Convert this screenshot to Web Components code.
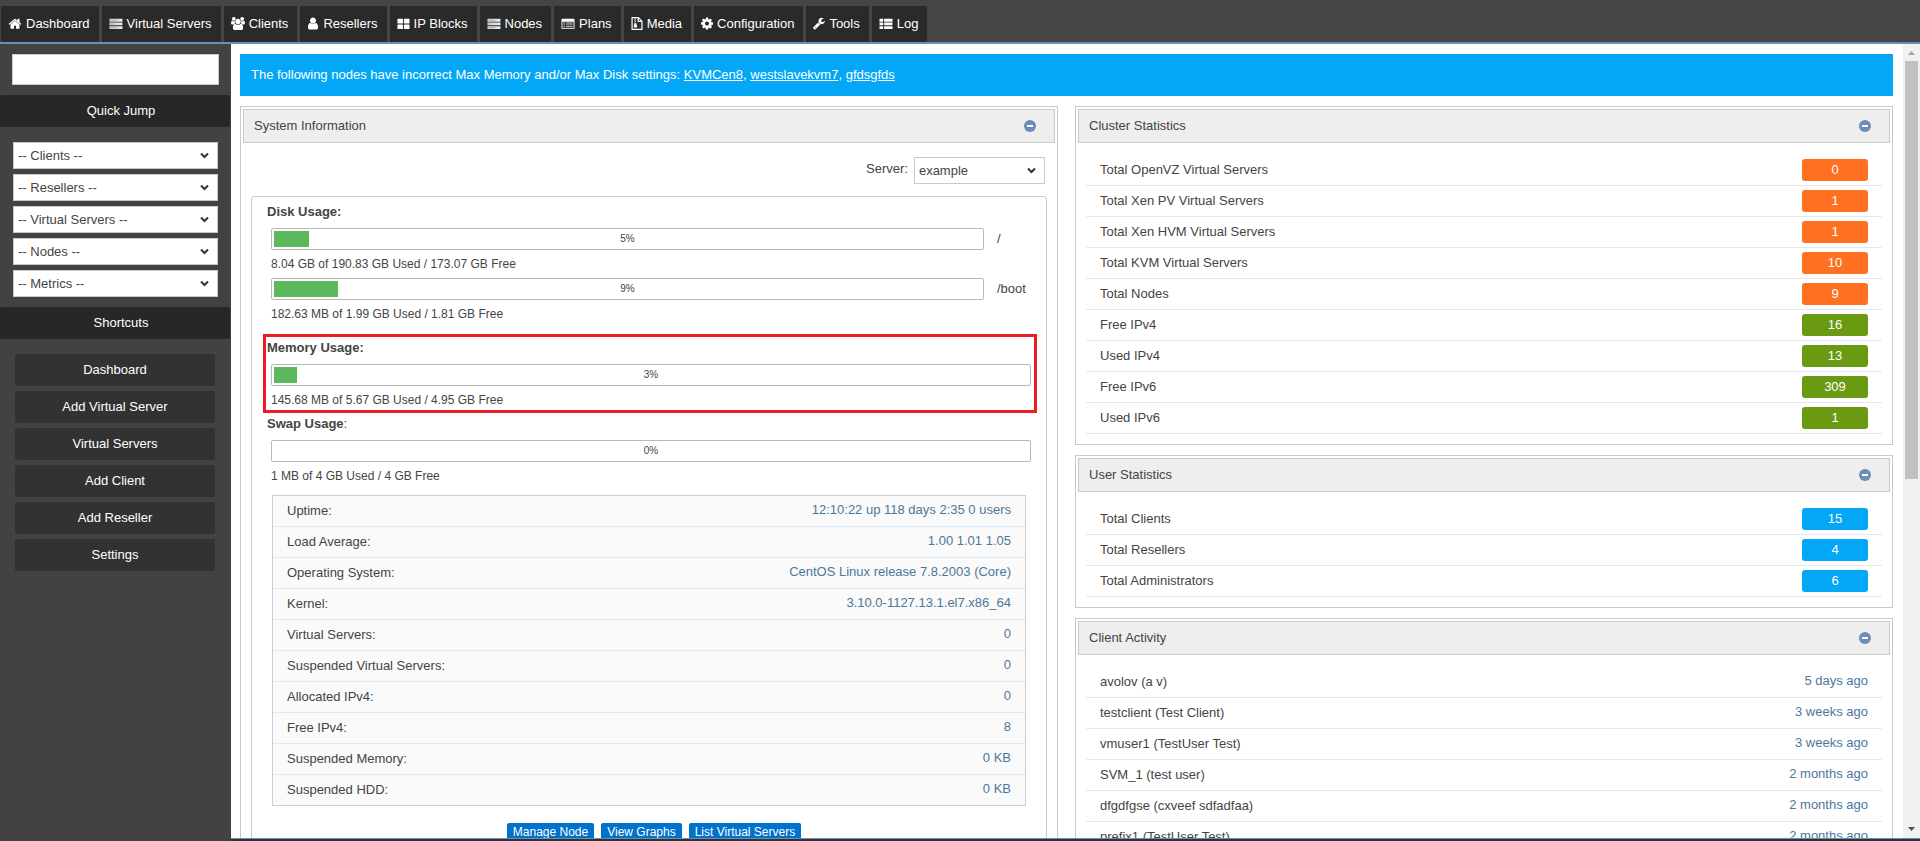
<!DOCTYPE html>
<html lang="en">
<head>
<meta charset="utf-8">
<title>Dashboard</title>
<style>
html, body { height: 100%; }
body {
  margin: 0;
  font-family: "Liberation Sans", Arial, sans-serif;
  font-size: 13px;
  line-height: 16px;
  color: #444;
  --rule: #dfe9f1;
  --edge: #c8caca;
  --steel: #6b8db8;
  --sky: #03a7f6;
  --value: #4d7799;
}
</style>
</head>
<body>
<admin-app></admin-app>
<script>
const ICONS = {
  home: ['0 100 1792 1500', '<path d="M1472 992v480q0 26-19 45t-45 19h-384v-384h-256v384h-384q-26 0-45-19t-19-45v-480q0-1 .5-3t.5-3l575-474 575 474q1 2 1 6zm223-69l-62 74q-8 9-21 11h-3q-13 0-21-7l-692-577-692 577q-12 8-24 7-13-2-21-11l-62-74q-8-10-7-23.5t11-21.5l719-599q32-26 76-26t76 26l244 204v-195q0-14 9-23t23-9h192q14 0 23 9t9 23v408l219 182q10 8 11 21.5t-7 23.5z"/>', 14],
  server: ['0 0 14 14', '<path opacity=".85" d="M0 2h14v3H0zM0 6h14v3H0zM0 10h14v3H0z"/><path fill="#2a2a2a" opacity=".3" d="M1 3h7v1H1zM1 7h4v1H1zM1 11h7v1H1z"/><path d="M11 3h2v1h-2zM11 7h2v1h-2zM11 11h2v1h-2z"/>', 14],
  users: ['-64 0 1920 1792', '<path d="M529 896q-162 5-265 128h-134q-82 0-138-40.5t-56-118.500q0-353 124-353 6 0 43.500 21t97.500 42.500 119 21.500q67 0 133-23-5 37-5 66 0 139 81 256zm1071 637q0 120-73 189.500t-194 69.500h-874q-121 0-194-69.500t-73-189.500q0-53 3.500-103.500t14-109 26.500-108.500 43-97.500 62-81 85.500-53.500 111.500-20q10 0 43 21.500t73 48 107 48 135 21.500 135-21.500 107-48 73-48 43-21.500q61 0 111.500 20t85.500 53.500 62 81 43 97.500 26.500 108.500 14 109 3.500 103.500zm-1024-1277q0 106-75 181t-181 75-181-75-75-181 75-181 181-75 181 75 75 181zm704 384q0 159-112.500 271.500t-271.500 112.500-271.500-112.500-112.500-271.500 112.500-271.500 271.500-112.500 271.500 112.500 112.500 271.500zm576 225q0 78-56 118.500t-138 40.500h-134q-103-123-265-128 81-117 81-256 0-29-5-66 66 23 133 23 59 0 119-21.500t97.500-42.500 43.500-21q124 0 124 353zm-128-609q0 106-75 181t-181 75-181-75-75-181 75-181 181-75 181 75 75 181z"/>', 14],
  user: ['196 64 1400 1660', '<path d="M1536 1399q0 109-62.500 187t-150.500 78h-854q-88 0-150.500-78t-62.500-187q0-85 8.500-160.500t31.500-152 58.500-131 94-89 134.500-34.500q131 128 313 128t313-128q76 0 134.500 34.500t94 89 58.500 131 31.500 152 8.500 160.500zm-256-887q0 159-112.500 271.500t-271.500 112.500-271.500-112.500-112.500-271.500 112.500-271.500 271.500-112.500 271.500 112.500 112.500 271.500z"/>', 12],
  blocks: ['0 0 13 14', '<rect x="0" y="2" width="6" height="5" rx=".6"/><rect x="7" y="2" width="6" height="5" rx=".6"/><rect x="0" y="8" width="6" height="5" rx=".6"/><rect x="7" y="8" width="6" height="5" rx=".6"/>', 13],
  plans: ['0 0 14 14', '<path fill-rule="evenodd" d="M1 2h12q1 0 1 1v9q0 1-1 1H1q-1 0-1-1V3q0-1 1-1zM1 5v7h12V5z"/><path opacity=".8" d="M2 6h2v1H2zM5 6h7v1H5zM2 8h2v1H2zM5 8h7v1H5zM2 10h2v1H2zM5 10h7v1H5z"/>', 14],
  media: ['0 0 12 14', '<path fill="none" stroke="currentColor" stroke-width="1.300" d="M.700.700h6.800l3.800 3.800v8.800H.700zM7.300.700v4h4"/><path d="M3 1h1v1H3zM4 2h1v1H4zM3 3h1v1H3zM4 4h1v1H4zM3 5h1v1H3zM3.500 6.500h1.500l1.200 3.200q.3 1.800-1.900 1.800t-1.900-1.800z"/>', 12],
  cog: ['128 128 1536 1536', '<path d="M1152 896q0-106-75-181t-181-75-181 75-75 181 75 181 181 75 181-75 75-181zm512-109v222q0 12-8 23t-20 13l-185 28q-19 54-39 91 35 50 107 138 10 12 10 25t-9 23q-27 37-99 108t-94 71q-12 0-26-9l-138-108q-44 23-91 38-16 136-29 186-7 28-36 28h-222q-14 0-24.500-8.500t-11.500-21.500l-28-184q-49-16-90-37l-141 107q-10 9-25 9-14 0-25-11-126-114-165-168-7-10-7-23 0-12 8-23 15-21 51-66.500t54-70.500q-27-50-41-99l-183-27q-13-2-21-12.500t-8-23.500v-222q0-12 8-23t19-13l186-28q14-46 39-92-40-57-107-138-10-12-10-24 0-10 9-23 26-36 98.500-107.500t94.500-71.500q13 0 26 10l138 107q44-23 91-38 16-136 29-186 7-28 36-28h222q14 0 24.500 8.500t11.500 21.500l28 184q49 16 90 37l142-107q9-9 24-9 13 0 25 10 129 119 165 170 7 8 7 22 0 12-8 23-15 21-51 66.500t-54 70.500q26 50 41 98l183 28q13 2 21 12.500t8 23.500z"/>', 12],
  wrench: ['64 64 1680 1720', '<path d="M448 1472q0-26-19-45t-45-19-45 19-19 45 19 45 45 19 45-19 19-45zm644-420l-682 682q-37 37-90 37-52 0-91-37l-106-108q-38-36-38-90 0-53 38-91l681-681q39 98 114.500 173.500t173.500 114.500zm634-435q0 39-23 106-47 134-164.500 217.500t-258.500 83.500q-185 0-316.500-131.500t-131.500-316.500 131.500-316.500 316.500-131.500q58 0 121.500 16.500t107.500 46.500q16 11 16 28t-16 28l-293 169v224l193 107q5-3 79-48.500t135.500-81 70.500-35.500q15 0 23.500 10t8.500 25z"/>', 12],
  list: ['0 0 14 14', '<path d="M0 2h4v3H0zM5 2h9v3H5zM0 6h4v3H0zM5 6h9v3H5zM0 10h4v3H0zM5 10h9v3H5z"/>', 14],
};

function define(name, html, setup) {
  const template = document.createElement('template');
  template.innerHTML = html;
  customElements.define(name, class extends HTMLElement {
    constructor() {
      super();
      this.attachShadow({ mode: 'open' }).append(template.content.cloneNode(true));
    }
    connectedCallback() { if (setup) setup(this, this.shadowRoot); }
  });
}

define('nav-tab', `
<style>
:host { display: block; }
a { display: flex; align-items: center; gap: 4px; height: 36px; padding: 0 9px 0 7px; box-sizing: border-box; background: #2a2a2a; color: #fff; text-decoration: none; white-space: nowrap; }
svg { height: 13px; fill: currentColor; flex: none; margin-bottom: 2px; }
</style>
<a href="#"><svg aria-hidden="true"></svg><slot></slot></a>`, (host, root) => {
  const [box, shape, width] = ICONS[host.getAttribute('icon')];
  const svg = root.querySelector('svg');
  svg.setAttribute('viewBox', box);
  svg.style.width = width + 'px';
  svg.innerHTML = shape;
});

define('top-nav', `
<style>
:host { display: block; background: #454545; border-bottom: 2px solid var(--steel); }
nav { display: flex; gap: 3px; padding: 6px 1px 0; }
</style>
<nav>
<nav-tab icon="home">Dashboard</nav-tab><nav-tab icon="server">Virtual Servers</nav-tab><nav-tab icon="users">Clients</nav-tab><nav-tab icon="user">Resellers</nav-tab><nav-tab icon="blocks">IP Blocks</nav-tab><nav-tab icon="server">Nodes</nav-tab><nav-tab icon="plans">Plans</nav-tab><nav-tab icon="media">Media</nav-tab><nav-tab icon="cog">Configuration</nav-tab><nav-tab icon="wrench">Tools</nav-tab><nav-tab icon="list">Log</nav-tab>
</nav>`);

define('drop-down', `
<style>
:host { display: block; }
label { display: flex; align-items: flex-start; gap: 6px; }
span { line-height: 24px; }
span:empty { display: none; }
.box { position: relative; flex: 1; display: block; }
select { display: block; appearance: none; width: 100%; height: 27px; margin: 0; padding: 0 22px 0 4px; border: 1px solid var(--edge); border-radius: 0; background: #fff; color: #444; font: inherit; }
svg { position: absolute; right: 9px; top: 10px; width: 9px; height: 7px; fill: none; stroke: #333; stroke-width: 2; pointer-events: none; }
</style>
<label><span></span><div class="box"><select><option></option></select><svg viewBox="0 0 9 7"><path d="M1 1.500l3.500 3.500 3.500-3.500"/></svg></div></label>`, (host, root) => {
  root.querySelector('span').textContent = host.getAttribute('label') || '';
  root.querySelector('option').textContent = host.getAttribute('value');
  root.querySelector('select').setAttribute('aria-label', host.getAttribute('label') || host.getAttribute('value'));
});

define('side-bar', `
<style>
:host { display: block; width: 231px; flex: none; box-sizing: border-box; background: #424242; }
.search { padding: 10px 12px; }
input { display: block; width: 100%; height: 31px; box-sizing: border-box; border: 1px solid #ccc; background: #fff; padding: 0 6px; font: inherit; }
h2 { margin: 0 1px 0 0; padding-left: 12px; height: 32px; line-height: 32px; background: #272727; color: #fff; font-size: 13px; font-weight: normal; text-align: center; border-radius: 2px; }
.jump { display: grid; gap: 5px; padding: 15px 13px 10px; }
.links { display: grid; gap: 5px; padding: 15px 16px 15px 15px; }
.links a { height: 32px; line-height: 32px; border-radius: 2px; background: #323232; color: #fff; text-align: center; text-decoration: none; }
</style>
<div class="search"><input type="text" aria-label="Search"></div>
<h2>Quick Jump</h2>
<div class="jump">
<drop-down value="-- Clients --"></drop-down><drop-down value="-- Resellers --"></drop-down><drop-down value="-- Virtual Servers --"></drop-down><drop-down value="-- Nodes --"></drop-down><drop-down value="-- Metrics --"></drop-down>
</div>
<h2>Shortcuts</h2>
<nav class="links">
<a href="#">Dashboard</a><a href="#">Add Virtual Server</a><a href="#">Virtual Servers</a><a href="#">Add Client</a><a href="#">Add Reseller</a><a href="#">Settings</a>
</nav>`);

define('alert-bar', `
<style>
:host { display: block; padding: 13px 11px; background: var(--sky); color: #fff; }
::slotted(a) { color: #fff; }
</style>
<slot></slot>`);

define('panel-box', `
<style>
:host { display: block; border: 1px solid var(--edge); padding: 2px; }
header { display: flex; align-items: center; justify-content: space-between; height: 34px; box-sizing: border-box; border: 1px solid var(--edge); background: #eee; padding: 0 18px 0 10px; }
h2 { margin: 0; font-size: 13px; font-weight: normal; line-height: 32px; }
button { display: block; border: 0; padding: 0; background: none; width: 12px; height: 12px; }
svg { display: block; }
.body { padding: 12px 8px 8px; }
</style>
<header><h2></h2><button type="button" aria-label="Collapse"><svg width="12" height="12" viewBox="0 0 12 12"><circle cx="6" cy="6" r="6" fill="#6b8db8"/><path fill="#fff" d="M3 5h6v2H3z"/></svg></button></header>
<div class="body"><slot></slot></div>`, (host, root) => {
  root.querySelector('h2').textContent = host.getAttribute('heading');
});

define('stat-list', `
<style>
:host { display: block; }
table { width: 100%; border-collapse: separate; border-spacing: 0; }
th, td { height: 30px; padding: 0 14px; border-bottom: 1px solid var(--rule); font-weight: normal; line-height: 16px; }
th { text-align: left; }
td { text-align: right; color: var(--value); padding-bottom: 2px; height: 28px; }
td.badge { padding-bottom: 0; height: 30px; }
td span { display: block; width: 66px; margin-left: auto; line-height: 21px; padding-bottom: 1px; border-radius: 3px; text-align: center; color: #fff; }
.orange { background: #ff7021; }
.green { background: #6a9a12; }
.blue { background: var(--sky); }
:host([boxed]) table { border: 1px solid #ccd0d3; background: #fafafa; }
:host([boxed]) tr:last-child > * { border-bottom: 0; }
</style>
<table><tbody></tbody></table>`, (host, root) => {
  const body = root.querySelector('tbody');
  host.getAttribute('rows').split(';').forEach(line => {
    const [name, value, tone] = line.split('|');
    const row = body.insertRow();
    const head = document.createElement('th');
    head.scope = 'row';
    head.textContent = name;
    row.append(head);
    const cell = row.insertCell();
    if (tone) {
      cell.className = 'badge';
      const pill = document.createElement('span');
      pill.className = tone;
      pill.textContent = value;
      cell.append(pill);
    } else cell.textContent = value;
  });
});

define('usage-bar', `
<style>
:host { display: block; }
.row { display: flex; align-items: center; gap: 13px; }
.track { flex: 1; position: relative; height: 22px; box-sizing: border-box; border: 1px solid #b8b8b8; border-radius: 2px; padding: 2px; }
.fill { height: 100%; background: #5cb85c; }
.pct { position: absolute; inset: 0; font-size: 10px; line-height: 20px; text-align: center; }
.mount { width: 34px; }
.mount:empty { display: none; }
p { margin: 6px 0 0; font-size: 12px; line-height: 16px; }
</style>
<div class="row"><div class="track" role="progressbar"><div class="fill"></div><div class="pct"></div></div><div class="mount"></div></div>
<p><slot></slot></p>`, (host, root) => {
  const pct = host.getAttribute('percent') + '%';
  root.querySelector('.fill').style.width = pct;
  root.querySelector('.pct').textContent = pct;
  root.querySelector('.mount').textContent = host.getAttribute('mount') || '';
});

define('usage-group', `
<style>
:host { display: block; padding: 3px 6px 2px 4px; }
:host([highlight]) { border: 3px solid #ed1c24; padding: 3px 3px 2px 1px; }
h3 { margin: 0 0 8px; font-size: 13px; line-height: 16px; font-weight: bold; }
.bars { display: grid; gap: 6px; padding-left: 4px; }
</style>
<h3><slot name="title"></slot></h3>
<div class="bars"><slot></slot></div>`);

define('scroll-rail', `
<style>
:host { display: flex; flex-direction: column; flex: none; width: 17px; background: #f1f1f1; }
svg { display: block; flex: none; width: 17px; height: 17px; }
.track { flex: 1; padding: 0 2px; }
.thumb { height: 55%; background: #c1c1c1; }
</style>
<svg viewBox="0 0 17 17"><path fill="#a3a3a3" d="M5 11h7l-3.500-4z"/></svg>
<div class="track"><div class="thumb"></div></div>
<svg viewBox="0 0 17 17"><path fill="#505050" d="M5 6h7l-3.500 4z"/></svg>`);

define('system-info', `
<style>
:host { display: block; }
.server { display: flex; justify-content: flex-end; padding: 2px 2px 12px; }
drop-down { width: 179px; }
.inner { border: 1px solid var(--edge); border-radius: 3px; padding: 4px 9px 20px 11px; }
.usage { display: grid; }
usage-group[highlight] { margin-top: 10px; }
.plain { font-weight: normal; }
stat-list { margin: 9px 11px 17px 9px; }
.actions { display: flex; justify-content: center; gap: 7px; padding-left: 8px; }
button { border: 0; border-radius: 2px; background: #0072cc; color: #fff; font: inherit; font-size: 12px; line-height: 18px; padding: 0 6px; }
</style>
<div class="server"><drop-down label="Server:" value="example"></drop-down></div>
<div class="inner">
<div class="usage">
<usage-group><span slot="title">Disk Usage:</span><usage-bar percent="5" mount="/">8.04 GB of 190.83 GB Used / 173.07 GB Free</usage-bar><usage-bar percent="9" mount="/boot">182.63 MB of 1.99 GB Used / 1.81 GB Free</usage-bar></usage-group>
<usage-group highlight><span slot="title">Memory Usage:</span><usage-bar percent="3">145.68 MB of 5.67 GB Used / 4.95 GB Free</usage-bar></usage-group>
<usage-group><span slot="title">Swap Usage<span class="plain">:</span></span><usage-bar percent="0">1 MB of 4 GB Used / 4 GB Free</usage-bar></usage-group>
</div>
<stat-list boxed rows="Uptime:|12:10:22 up 118 days 2:35 0 users;Load Average:|1.00 1.01 1.05;Operating System:|CentOS Linux release 7.8.2003 (Core);Kernel:|3.10.0-1127.13.1.el7.x86_64;Virtual Servers:|0;Suspended Virtual Servers:|0;Allocated IPv4:|0;Free IPv4:|8;Suspended Memory:|0 KB;Suspended HDD:|0 KB"></stat-list>
<div class="actions"><button type="button">Manage Node</button><button type="button">View Graphs</button><button type="button">List Virtual Servers</button></div>
</div>`);

define('admin-app', `
<style>
:host { display: flex; flex-direction: column; height: 100vh; }
.shell { flex: 1; min-height: 0; display: flex; }
.page { flex: 1; min-width: 0; display: flex; flex-direction: column; }
.view { flex: 1; min-height: 0; display: flex; }
main { flex: 1; min-width: 0; overflow: hidden; box-sizing: border-box; padding: 10px 10px 0 9px; background: #fff; }
.columns { display: grid; grid-template-columns: 1fr 1fr; gap: 17px; align-items: start; margin-top: 10px; }
.stack { display: grid; gap: 10px; }
footer { flex: none; height: 2px; border-top: 1px solid var(--steel); background: #333; }
</style>
<top-nav></top-nav>
<div class="shell">
<side-bar></side-bar>
<div class="page">
<div class="view">
<main>
<alert-bar>The following nodes have incorrect Max Memory and/or Max Disk settings: <a href="#">KVMCen8</a>, <a href="#">westslavekvm7</a>, <a href="#">gfdsgfds</a></alert-bar>
<div class="columns">
<panel-box heading="System Information"><system-info></system-info></panel-box>
<div class="stack">
<panel-box heading="Cluster Statistics"><stat-list rows="Total OpenVZ Virtual Servers|0|orange;Total Xen PV Virtual Servers|1|orange;Total Xen HVM Virtual Servers|1|orange;Total KVM Virtual Servers|10|orange;Total Nodes|9|orange;Free IPv4|16|green;Used IPv4|13|green;Free IPv6|309|green;Used IPv6|1|green"></stat-list></panel-box>
<panel-box heading="User Statistics"><stat-list rows="Total Clients|15|blue;Total Resellers|4|blue;Total Administrators|6|blue"></stat-list></panel-box>
<panel-box heading="Client Activity"><stat-list rows="avolov (a v)|5 days ago;testclient (Test Client)|3 weeks ago;vmuser1 (TestUser Test)|3 weeks ago;SVM_1 (test user)|2 months ago;dfgdfgse (cxveef sdfadfaa)|2 months ago;prefix1 (TestUser Test)|2 months ago"></stat-list></panel-box>
</div>
</div>
</main>
<scroll-rail></scroll-rail>
</div>
<footer></footer>
</div>
</div>`);
</script>
</body>
</html>
